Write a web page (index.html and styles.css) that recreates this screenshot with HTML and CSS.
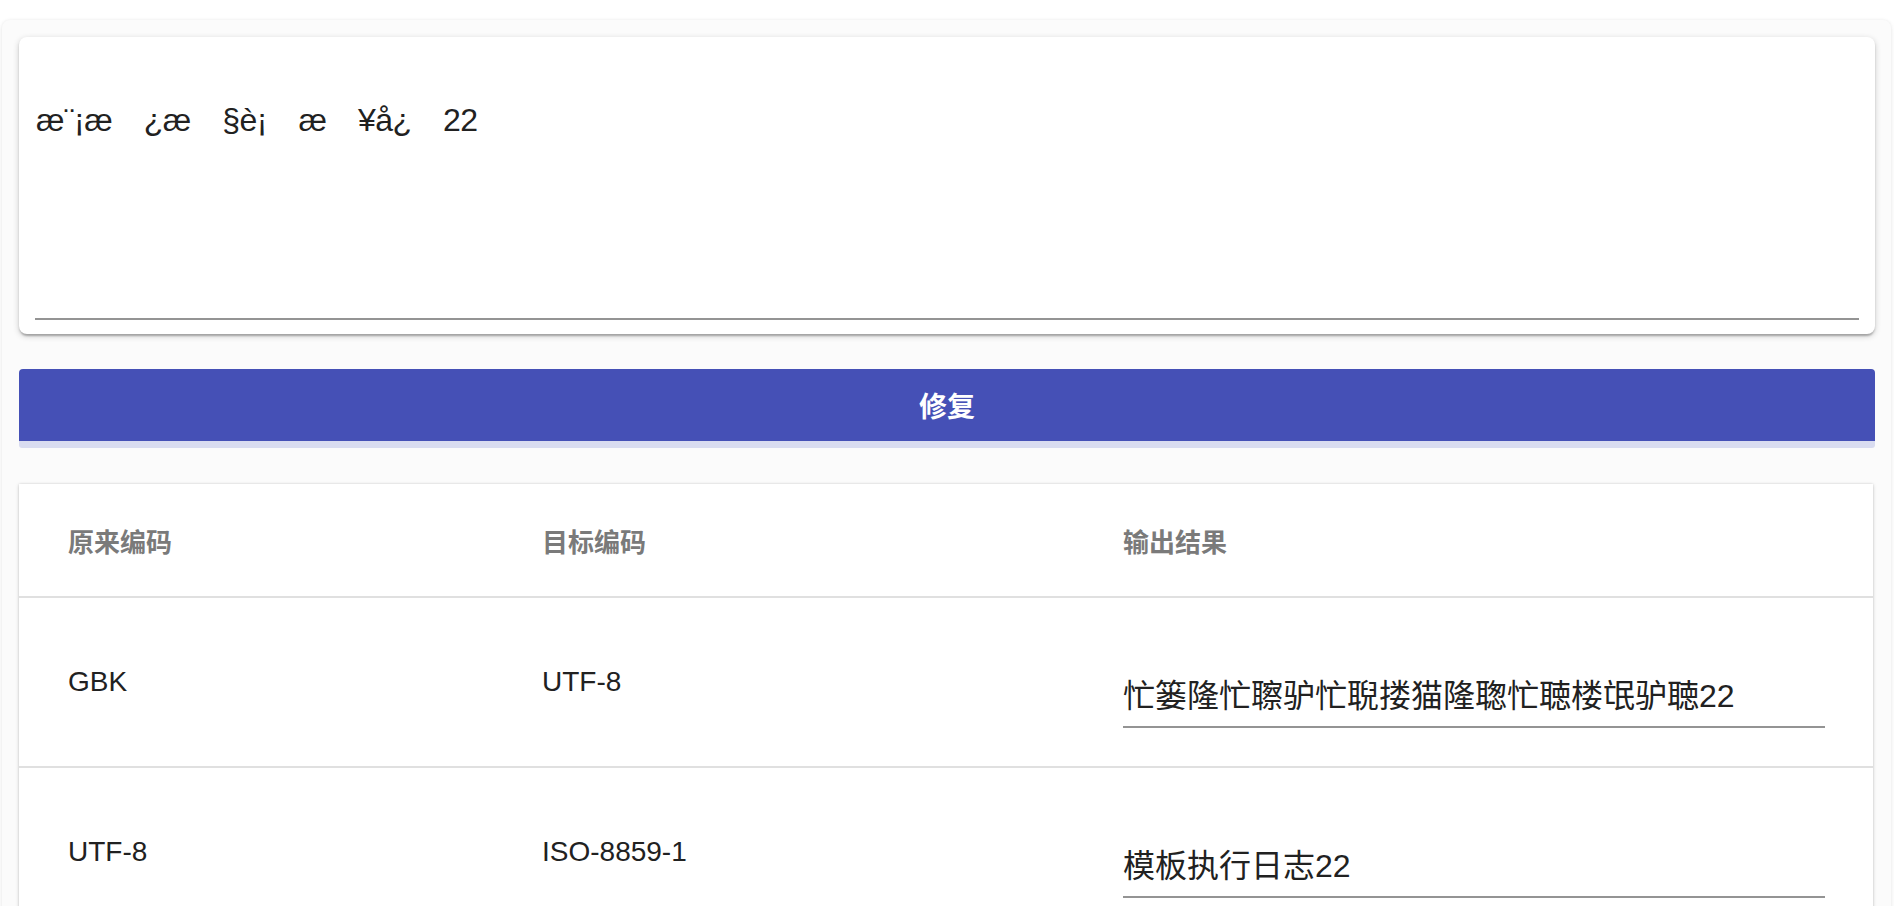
FILE: index.html
```html
<!DOCTYPE html>
<html lang="zh-CN">
<head>
<meta charset="utf-8">
<title>编码修复</title>
<link rel="stylesheet" href="styles.css">
</head>
<body>
<main class="page">
  <section class="input-card">
    <textarea class="source" spellcheck="false">æ¨¡æ&#8195;¿æ&#8195;§è¡&#8195;æ&#8195;¥å¿&#8195;22</textarea>
  </section>

  <button class="fix-btn" type="button">修复</button>
  <div class="progress"></div>

  <section class="result-card">
    <table class="result-table">
      <colgroup>
        <col class="c1">
        <col class="c2">
        <col class="c3">
      </colgroup>
      <thead>
        <tr>
          <th>原来编码</th>
          <th>目标编码</th>
          <th>输出结果</th>
        </tr>
      </thead>
      <tbody>
        <tr>
          <td>GBK</td>
          <td>UTF-8</td>
          <td><div class="out-field"><input class="out" type="text" value="忙篓隆忙聺驴忙聣搂猫隆聦忙聴楼氓驴聴22"></div></td>
        </tr>
        <tr>
          <td>UTF-8</td>
          <td>ISO-8859-1</td>
          <td><div class="out-field"><input class="out" type="text" value="模板执行日志22"></div></td>
        </tr>
      </tbody>
    </table>
  </section>
</main>
</body>
</html>
```

FILE: styles.css
```css
html, body {
  margin: 0;
  padding: 0;
  background: #ffffff;
}

body {
  font-family: "Liberation Sans", "Noto Sans CJK SC", sans-serif;
  color: #212121;
  overflow: hidden;
}

.page {
  margin: 20px 3px 0 2px;
  padding: 17px 16px 40px 17px;
  background: #fbfbfb;
  border-radius: 8px;
  box-shadow: 0 2px 6px rgba(0, 0, 0, 0.07), 0 0 3px rgba(0, 0, 0, 0.06);
  min-height: 1000px;
}

.input-card {
  background: #ffffff;
  border-radius: 8px;
  padding: 54px 16px 14px;
  box-shadow: 0 2px 6px rgba(0, 0, 0, 0.2), 0 2px 2px rgba(0, 0, 0, 0.14), 0 4px 2px -2px rgba(0, 0, 0, 0.12);
}

.source {
  display: block;
  box-sizing: border-box;
  width: 100%;
  height: 229px;
  margin: 0;
  padding: 10px 0 16px 1px;
  border: 0;
  border-bottom: 2px solid #949494;
  outline: none;
  resize: none;
  background: transparent;
  font-family: "Liberation Sans", "Noto Sans CJK SC", sans-serif;
  font-size: 32px;
  line-height: 38px;
  letter-spacing: -0.5px;
  color: #212121;
}

.fix-btn {
  display: block;
  width: 100%;
  height: 72px;
  margin: 35px 0 0;
  padding: 0;
  border: 0;
  border-radius: 4px 4px 0 0;
  background: #4550b6;
  color: #ffffff;
  font-family: "Liberation Sans", "Noto Sans CJK SC", sans-serif;
  font-size: 28px;
  font-weight: 700;
  letter-spacing: 0;
}

.progress {
  height: 7px;
  background: #d9dcf0;
  border-radius: 0 0 3px 3px;
}

.result-card {
  margin-top: 36px;
  margin-right: 2px;
  background: #ffffff;
  box-shadow: 0 1px 4px rgba(0, 0, 0, 0.16), 0 0 2px rgba(0, 0, 0, 0.12);
}

.result-table {
  width: 100%;
  border-collapse: collapse;
  table-layout: fixed;
}

.c1 { width: 474px; }
.c2 { width: 581px; }

.result-table th,
.result-table td {
  padding: 0 56px 0 49px;
  text-align: left;
  border-bottom: 2px solid #e0e0e0;
  vertical-align: middle;
}

.result-table th:last-child,
.result-table td:last-child {
  padding-right: 48px;
}

.result-table th {
  height: 112px;
  font-size: 26px;
  font-weight: 700;
  color: #7a7a7a;
}

.result-table td {
  height: 168px;
  font-size: 28px;
  color: #212121;
}

.out-field {
  margin: 32px 0 6px;
  border-bottom: 2px solid #949494;
}

.out {
  display: block;
  box-sizing: border-box;
  width: 100%;
  height: 64px;
  padding: 12px 0 14px;
  margin: 0;
  border: 0;
  outline: none;
  background: transparent;
  font-family: "Liberation Sans", "Noto Sans CJK SC", sans-serif;
  font-size: 32px;
  line-height: 38px;
  color: #212121;
}
```
